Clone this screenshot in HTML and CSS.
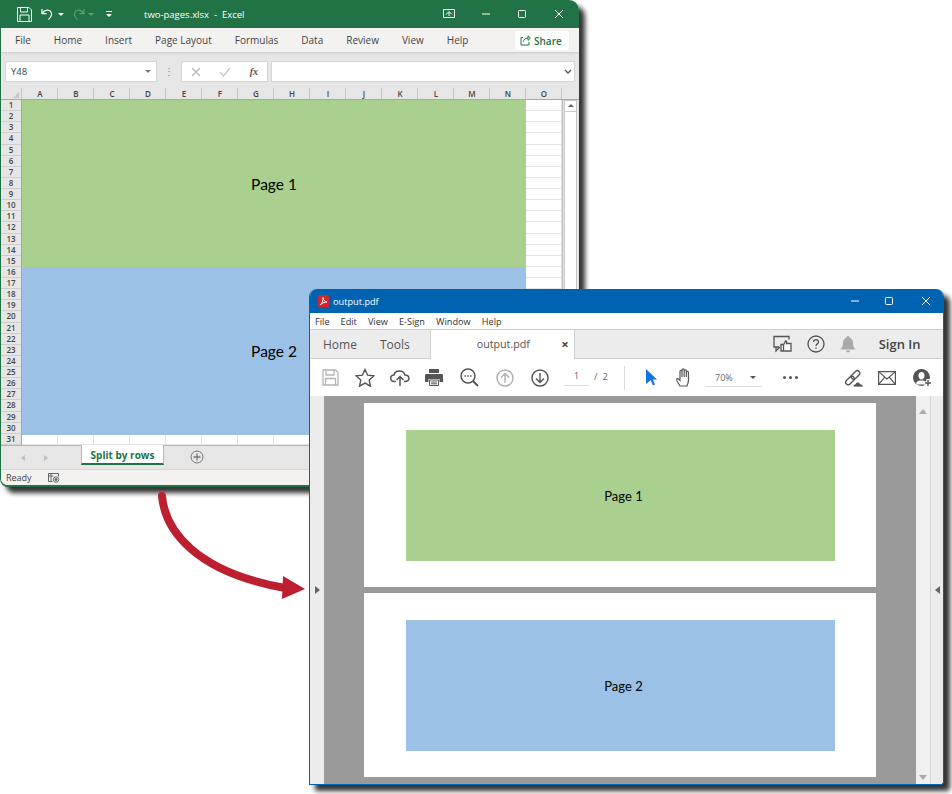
FILE: index.html
```html
<!DOCTYPE html>
<html lang="en">
<head>
  <meta charset="UTF-8">
  <title>two-pages.xlsx to output.pdf</title>
  <link rel="stylesheet" href="styles.css">
</head>
<body>
  <div class="stage">

    <div class="window excel">
      <div class="xl-title">
        <svg class="xl-save" width="15" height="15" viewBox="0 0 15 15" fill="none" stroke="#fff"><path d="M.5.5h11.500l2.500 2.500v11.500h-14z"/><path d="M3.500.5v4.500h7v-4.500M3 14.500v-6.500h9v6.500"/></svg>
        <svg class="xl-undo" width="13" height="13" viewBox="0 0 14 14" fill="none" stroke="#fff" stroke-width="1.300"><path d="M1 1v5h5"/><path d="M1.500 5.500c2-3 5.500-4 8-2.500 3 2 2.500 6-1.500 9.500"/></svg>
        <span class="caret xl-c1"></span>
        <svg class="xl-redo" width="13" height="13" viewBox="0 0 14 14" fill="none" stroke="#5f9c7d" stroke-width="1.200"><path d="M13 1v5h-5"/><path d="M12.500 5.500c-2-3-5.500-4-8-2.500-3 2-2.500 6 1.500 9.500"/></svg>
        <span class="caret dim xl-c2"></span>
        <svg class="xl-qat" width="8" height="8" viewBox="0 0 8 8" fill="#fff"><path d="M1 1h6v1h-6zM1 4h6l-3 3z"/></svg>
        <span class="xl-name">two-pages.xlsx&nbsp; - &nbsp;Excel</span>
        <svg class="xl-disp" width="12" height="10" viewBox="0 0 12 10" fill="none" stroke="#fff"><path d="M.5.5h11v8h-11z"/><path d="M3 5.500l3-3 3 3M6 3v4"/></svg>
        <svg class="xl-min" width="10" height="10" viewBox="0 0 10 10" stroke="#fff"><path d="M1 5h8"/></svg>
        <svg class="xl-max" width="10" height="10" viewBox="0 0 10 10" fill="none" stroke="#fff"><rect x="1.500" y="1.500" width="7" height="7" rx="1"/></svg>
        <svg class="xl-close" width="10" height="10" viewBox="0 0 10 10" stroke="#fff"><path d="M1 1l8 8M9 1l-8 8"/></svg>
      </div>

      <div class="xl-menu">
        <span>File</span><span>Home</span><span>Insert</span><span>Page Layout</span><span>Formulas</span><span>Data</span><span>Review</span><span>View</span><span>Help</span>
        <div class="share">
          <svg width="11" height="11" viewBox="0 0 11 11" fill="none" stroke="#217346"><path d="M8 .8l2.500 2.300-2.500 2.300zM8 3.100c-3 0-4.500 1.500-4.500 3.500M3 2.500h-2v7.500h8v-3"/></svg>
          Share
        </div>
      </div>

      <div class="xl-formula">
        <div class="namebox">Y48<span class="caret grey"></span></div>
        <span class="grip">⋮</span>
        <div class="fx-group">
          <svg width="10" height="10" viewBox="0 0 10 10" stroke="#b5b5b5" stroke-width="1.200"><path d="M1 1l8 8M9 1l-8 8"/></svg>
          <svg width="12" height="10" viewBox="0 0 12 10" fill="none" stroke="#c4c4c4" stroke-width="1.200"><path d="M1 5l3.500 4L11 1"/></svg>
          <i>fx</i>
        </div>
        <div class="formula-input">
          <svg width="8" height="6" viewBox="0 0 8 6" fill="none" stroke="#555" stroke-width="1.300"><path d="M1 1l3 3 3-3"/></svg>
        </div>
      </div>

      <div class="sheet-head">
        <div class="corner"><span></span></div>
        <span>A</span><span>B</span><span>C</span><span>D</span><span>E</span><span>F</span><span>G</span><span>H</span><span>I</span><span>J</span><span>K</span><span>L</span><span>M</span><span>N</span><span>O</span>
      </div>

      <div class="sheet-body">
        <div class="row-heads">
          <span>1</span><span>2</span><span>3</span><span>4</span><span>5</span><span>6</span><span>7</span><span>8</span><span>9</span><span>10</span><span>11</span><span>12</span><span>13</span><span>14</span><span>15</span><span>16</span><span>17</span><span>18</span><span>19</span><span>20</span><span>21</span><span>22</span><span>23</span><span>24</span><span>25</span><span>26</span><span>27</span><span>28</span><span>29</span><span>30</span><span>31</span>
        </div>
        <div class="cells">
          <div class="fill fill-green">Page 1</div>
          <div class="fill fill-blue">Page 2</div>
        </div>
        <div class="xl-scroll">
          <div class="xl-scroll-up"></div>
        </div>
      </div>

      <div class="xl-tabs">
        <span class="nav nav-l"></span>
        <span class="nav nav-r"></span>
        <div class="sheet-tab">Split by rows</div>
        <svg class="add-sheet" width="14" height="14" viewBox="0 0 14 14" fill="none" stroke="#777"><circle cx="7" cy="7" r="6"/><path d="M7 3.500v7M3.500 7h7" stroke-width="1.300"/></svg>
      </div>

      <div class="xl-status">
        <span>Ready</span>
        <svg width="12" height="11" viewBox="0 0 12 11" fill="none" stroke="#666"><path d="M.5 1.500h10v3M.5 1.500v8h4M.5 4h5M3 1.500v8"/><circle cx="8" cy="7.500" r="2.700"/><circle cx="8" cy="7.500" r="1" fill="#666"/></svg>
      </div>
    </div>

    <svg class="arrow" width="160" height="120" viewBox="0 0 160 120">
      <path d="M7 8C10 42 40 84 130 100" fill="none" stroke="#bd1f30" stroke-width="8" stroke-linecap="round"/>
      <path d="M128 88l22 13-23 10z" fill="#bd1f30"/>
    </svg>

    <div class="window acrobat">
      <div class="pdf-title">
        <svg width="11" height="12" viewBox="0 0 11 12"><rect width="11" height="12" rx="1.500" fill="#d8232a"/><path d="M2.500 9.500c1.500-1 3-4.500 2.500-7 .5 3 2 4.500 4 4.500-2.500 0-4.500 1-6.500 2.500z" fill="none" stroke="#fff"/></svg>
        <span class="pdf-name">output.pdf</span>
        <svg class="pdf-min" width="10" height="10" viewBox="0 0 10 10" stroke="#fff"><path d="M1 5h8"/></svg>
        <svg class="pdf-max" width="10" height="10" viewBox="0 0 10 10" fill="none" stroke="#fff"><rect x="1.500" y="1.500" width="7" height="7" rx="1"/></svg>
        <svg class="pdf-close" width="10" height="10" viewBox="0 0 10 10" stroke="#fff"><path d="M1 1l8 8M9 1l-8 8"/></svg>
      </div>

      <div class="pdf-menu">
        <span>File</span><span>Edit</span><span>View</span><span>E-Sign</span><span>Window</span><span>Help</span>
      </div>

      <div class="pdf-tabs">
        <span class="pdf-home">Home</span>
        <span class="pdf-tools">Tools</span>
        <div class="doc-tab">output.pdf<b>×</b></div>
        <svg class="tab-comment" width="20" height="18" viewBox="0 0 20 18" fill="none" stroke="#555" stroke-width="1.300"><path d="M6 12H1V1.500h15v3"/><path d="M3 12v4l4-4"/><path d="M8 9.500h2.500V16H8zM10.500 10l2-4c1 0 1.500.8 1 2.500h4.500V16h-7.500" fill="#fff"/></svg>
        <svg class="tab-help" width="18" height="18" viewBox="0 0 18 18" fill="none" stroke="#555" stroke-width="1.300"><circle cx="9" cy="9" r="8"/><path d="M6.500 7c0-3.300 5-3.300 5 0 0 2-2.500 1.800-2.500 4"/><path d="M9 12.500v1.500"/></svg>
        <svg class="tab-bell" width="16" height="17" viewBox="0 0 16 17" fill="#aaa"><path d="M8 0c1 0 1.500.7 1.500 1.500C12 2.500 13 4.500 13 7c0 3 1 4.500 2.500 6.500h-15C2 11.500 3 10 3 7c0-2.500 1-4.500 3.500-5.500C6.500.7 7 0 8 0zM6 14.500h4c0 2.500-4 2.500-4 0z"/></svg>
        <span class="sign-in">Sign In</span>
      </div>

      <div class="pdf-tools-bar">
        <svg class="tb-save" width="17" height="17" viewBox="0 0 17 17" fill="none" stroke="#b5b5b5" stroke-width="1.300"><path d="M1 1h12.500L16 3.500V16H1z"/><path d="M4 1v5h8V1M3.500 16V9.500h10V16"/></svg>
        <svg class="tb-star" width="20" height="19" viewBox="0 0 20 19" fill="none" stroke="#555" stroke-width="1.400"><path d="M10 1.500l2.600 5.700 6.200.7-4.600 4.200 1.300 6.100L10 15.100l-5.500 3.100 1.300-6.100L1.200 7.900l6.200-.7z"/></svg>
        <svg class="tb-cloud" width="20" height="18" viewBox="0 0 20 18" fill="none" stroke="#555" stroke-width="1.500"><path d="M6 12.500H4.500C-.5 12.500-.5 6 4 6c1-5 9-5.500 11 0 5 0 5.500 6.500 0 6.500h-1"/><path d="M10 17V7.500M6.500 11L10 7.500l3.500 3.500"/></svg>
        <svg class="tb-print" width="18" height="17" viewBox="0 0 18 17"><path d="M4 0h10v4H4z" fill="#555"/><path d="M1.500 5h15c1 0 1.500.5 1.500 1.500V13h-3.500v-3h-11v3H0V6.500C0 5.500.5 5 1.500 5z" fill="#555"/><path d="M4.500 11h9v5.500h-9z" fill="#fff" stroke="#555"/><path d="M6 13h6M6 14.800h6" stroke="#555"/></svg>
        <svg class="tb-find" width="19" height="19" viewBox="0 0 19 19" fill="none" stroke="#555" stroke-width="1.500"><circle cx="8" cy="8" r="7"/><path d="M13 13l5 5" stroke-width="2"/><path d="M4.500 8h1.500M7.300 8h1.500M10 8h1.500" stroke-width="1.300"/></svg>
        <svg class="tb-up" width="18" height="18" viewBox="0 0 18 18" fill="none" stroke="#b0b0b0" stroke-width="1.400"><circle cx="9" cy="9" r="8"/><path d="M9 14V4.500M5 8.500l4-4 4 4"/></svg>
        <svg class="tb-down" width="18" height="18" viewBox="0 0 18 18" fill="none" stroke="#555" stroke-width="1.400"><circle cx="9" cy="9" r="8"/><path d="M9 4v9.500M5 9.500l4 4 4-4"/></svg>
        <span class="page-no">1</span>
        <span class="page-of">/&nbsp; 2</span>
        <span class="tb-sep"></span>
        <svg class="tb-pointer" width="11" height="17" viewBox="0 0 11 17" fill="#1473e6"><path d="M0 0l11 10.500H6.800l2.200 5-2 1-2.300-5.200L0 15z"/></svg>
        <svg class="tb-hand" width="18" height="19" viewBox="0 0 18 19" fill="none" stroke="#555" stroke-width="1.200"><path d="M4 18c-1-2-3-4-3.300-6-.2-1.500 1.200-1.800 2-.8L4 12.500V3.500c0-1.500 2-1.500 2 0V9 2c0-1.500 2.200-1.500 2.200 0v7-6c0-1.500 2.200-1.500 2.200 0v6-4.500c0-1.500 2.100-1.500 2.100 0V12c0 2.500-1 4-1.500 6z" transform="translate(2 0)"/></svg>
        <div class="zoom-box">70%<span class="caret dark"></span></div>
        <span class="tb-more"><i></i><i></i><i></i></span>
        <svg class="tb-link" width="20" height="18" viewBox="0 0 20 18" fill="none" stroke="#555" stroke-width="1.400"><rect x="1" y="9" width="10" height="5" rx="2.500" transform="rotate(-45 6 11.500)"/><rect x="6.500" y="3.500" width="10" height="5" rx="2.500" transform="rotate(-45 11.500 6)"/><path d="M10.500 18c-1.500 0-1.500-3 .8-3 .7-2.500 4.500-2.500 5 0 2.200 0 3 1.500 3 3z" fill="#555" stroke="#fff" stroke-width=".8"/></svg>
        <svg class="tb-mail" width="18" height="14" viewBox="0 0 18 14" fill="none" stroke="#555" stroke-width="1.200"><path d="M.6.6h16.800v12.800H.6z"/><path d="M.6.6L9 8l8.400-7.400M.6 13.400l6-7M17.400 13.400l-6-7"/></svg>
        <svg class="tb-user" width="19" height="18" viewBox="0 0 19 18"><circle cx="8.500" cy="8.500" r="8.500" fill="#555"/><path d="M8.500 3c2 0 3 1.500 3 3.500s-1 4-3 4-3-2-3-4S6.500 3 8.500 3z" fill="#fff"/><path d="M3 14c1-2 3-2.500 5.500-2.500 1 0 2 .1 3 .5v3.500H4z" fill="#fff"/><path d="M15 10v8M11 14h8" stroke="#fff" stroke-width="3.500"/><path d="M15 11v6M12 14h6" stroke="#555" stroke-width="1.400"/></svg>
      </div>

      <div class="pdf-body">
        <div class="side-left"><span class="tri tri-r"></span></div>
        <div class="canvas">
          <div class="pdf-page"><div class="pdf-box box-green">Page 1</div></div>
          <div class="pdf-page"><div class="pdf-box box-blue">Page 2</div></div>
        </div>
        <div class="pdf-scroll">
          <span class="tri tri-up"></span>
          <span class="tri tri-down"></span>
        </div>
        <div class="side-right"><span class="tri tri-l"></span></div>
      </div>
    </div>

  </div>
</body>
</html>
```

FILE: styles.css
```css
* {
  box-sizing: border-box;
}
body {
  margin: 0;
  background: #fff;
  font-family: "Open Sans", "Noto Sans", sans-serif;
  color: #444;
}
.stage {
  position: relative;
  width: 952px;
  height: 794px;
  overflow: hidden;
}
.window {
  position: absolute;
  display: flex;
  flex-direction: column;
  overflow: hidden;
  box-shadow: 6px 6px 5px rgba(0, 0, 0, 0.8);
}
.caret {
  display: block;
  width: 0;
  height: 0;
  border-left: 3px solid transparent;
  border-right: 3px solid transparent;
  border-top: 3px solid #fff;
}
.caret.dim {
  border-top-color: #5f9c7d;
}
.caret.grey {
  border-top-color: #777;
}
.caret.dark {
  border-top-color: #555;
}

/* excel window */
.excel {
  left: 0;
  top: 0;
  width: 579px;
  height: 487px;
  border-radius: 0 10px 10px 8px;
  background: #e6e6e6;
  border-left: 1px solid #217346;
  border-bottom: 2px solid #217346;
}
.xl-title {
  display: flex;
  align-items: center;
  height: 28px;
  flex: none;
  background: #217346;
  color: #fff;
  font-size: 9.5px;
}
.xl-save { margin-left: 16px; }
.xl-undo { margin-left: 9px; }
.xl-c1 { margin-left: 4px; }
.xl-redo { margin-left: 8px; }
.xl-c2 { margin-left: 3px; }
.xl-qat { margin-left: 11px; }
.xl-name {
  margin-left: 31px;
  width: 299px;
  white-space: nowrap;
}
.xl-min { margin-left: 26px; }
.xl-max { margin-left: 26px; }
.xl-close { margin-left: 27px; }
.xl-menu {
  position: relative;
  display: flex;
  align-items: center;
  gap: 23px;
  height: 24px;
  flex: none;
  padding-left: 14px;
  background: #f3f2f1;
  font-size: 10px;
  box-shadow: 0 1px 2px rgba(0, 0, 0, 0.12);
}
.share {
  display: flex;
  align-items: center;
  gap: 3px;
  margin-left: auto;
  margin-right: 10px;
  margin-top: 1px;
  width: 54px;
  height: 19px;
  padding-left: 5px;
  background: #fff;
  color: #217346;
  font-size: 10px;
  font-weight: 600;
  border-radius: 2px;
}
.xl-formula {
  display: flex;
  align-items: flex-start;
  height: 36px;
  flex: none;
  padding: 9px 4px 0 4px;
  background: #e6e6e6;
}
.namebox {
  display: flex;
  align-items: center;
  justify-content: space-between;
  width: 152px;
  height: 21px;
  padding: 0 5px;
  background: #fff;
  border: 1px solid #d6d6d6;
  font-size: 9.5px;
}
.grip {
  width: 24px;
  text-align: center;
  font-size: 10px;
  line-height: 21px;
  color: #888;
}
.fx-group {
  display: flex;
  align-items: center;
  justify-content: space-between;
  width: 87px;
  height: 21px;
  padding: 0 9px;
  background: #fff;
  border: 1px solid #d6d6d6;
}
.fx-group i {
  font-family: "Liberation Serif", serif;
  font-size: 10px;
  font-weight: 700;
  color: #555;
}
.formula-input {
  display: flex;
  align-items: center;
  justify-content: flex-end;
  flex: 1;
  height: 21px;
  margin-left: 3px;
  padding-right: 2px;
  background: #fff;
  border: 1px solid #d6d6d6;
}
.sheet-head {
  display: grid;
  grid-template-columns: 21px repeat(15, 36px);
  height: 12px;
  flex: none;
  background: #e6e6e6;
  border-bottom: 1px solid #a8a8a8;
  font-size: 8px;
  line-height: 11px;
  font-weight: 600;
  color: #444;
  text-align: center;
}
.sheet-head span {
  padding-left: 1px;
  border-right: 1px solid #c6c6c6;
}
.sheet-head .corner {
  position: relative;
  border-right: 1px solid #c6c6c6;
}
.corner span {
  position: absolute;
  right: 2px;
  bottom: 1px;
  width: 0;
  height: 0;
  padding: 0;
  border-left: 6px solid transparent;
  border-bottom: 6px solid #c8c8c8;
  border-right: 0;
}
.sheet-body {
  display: flex;
  height: 345px;
  flex: none;
}
.row-heads {
  display: grid;
  grid-auto-rows: 11.13px;
  width: 21px;
  flex: none;
  background: #e6e6e6;
  border-right: 1px solid #a8a8a8;
  font-size: 8px;
  font-weight: 600;
  text-align: center;
}
.row-heads span {
  line-height: 10.5px;
  border-bottom: 1px solid #cdcdcd;
}
.cells {
  width: 541px;
  flex: none;
  background-color: #fff;
  background-image:
    repeating-linear-gradient(to bottom, transparent 0, transparent 10.13px, #e3e3e3 10.13px, #e3e3e3 11.13px),
    repeating-linear-gradient(to right, transparent 0, transparent 35px, #e3e3e3 35px, #e3e3e3 36px);
  border-right: 1px solid #bdbdbd;
}
.fill {
  display: flex;
  align-items: center;
  justify-content: center;
  width: 504px;
  font-family: Lato, "Open Sans", sans-serif;
  font-size: 15.5px;
  color: #000;
}
.fill-green {
  height: 167px;
  background: #a9d08e;
}
.fill-blue {
  height: 168px;
  background: #9bc2e6;
}
.xl-scroll {
  width: 13px;
  margin-left: 1px;
  background: #fff;
  border: 1px solid #c8c8c8;
  border-top: 0;
}
.xl-scroll-up {
  position: relative;
  height: 12px;
  margin: 0 -1px;
  background: #fff;
  border: 1px solid #c8c8c8;
}
.xl-scroll-up::after {
  content: "";
  position: absolute;
  left: 3px;
  top: 3px;
  border-left: 3px solid transparent;
  border-right: 3px solid transparent;
  border-bottom: 3px solid #666;
}
.xl-tabs {
  display: flex;
  align-items: flex-start;
  height: 24px;
  flex: none;
  background: #e6e6e6;
  border-top: 1px solid #b8b8b8;
}
.nav {
  display: block;
  width: 0;
  height: 0;
  margin-top: 9px;
  border-top: 3px solid transparent;
  border-bottom: 3px solid transparent;
}
.nav-l {
  margin-left: 20px;
  border-right: 4px solid #bdbdbd;
}
.nav-r {
  margin-left: 19px;
  border-left: 4px solid #bdbdbd;
}
.sheet-tab {
  width: 83px;
  height: 20px;
  margin-left: 33px;
  margin-top: -1px;
  background: #fff;
  border-left: 1px solid #b8b8b8;
  border-right: 1px solid #b8b8b8;
  border-bottom: 2px solid #217346;
  color: #217346;
  font-size: 10px;
  font-weight: 700;
  line-height: 20px;
  text-align: center;
}
.add-sheet {
  margin-left: 26px;
  margin-top: 4px;
}
.xl-status {
  display: flex;
  align-items: center;
  gap: 16px;
  flex: 1;
  padding-left: 5px;
  background: #f3f2f1;
  border-top: 1px solid #d6d6d6;
  font-size: 9px;
}

/* arrow between the two windows */
.arrow {
  position: absolute;
  left: 155px;
  top: 488px;
}

/* acrobat window */
.acrobat {
  left: 309px;
  top: 289px;
  width: 635px;
  height: 496px;
  border-radius: 8px 8px 4px 0;
  background: #fff;
  border-left: 1px solid #0063b1;
  border-right: 1px solid #0063b1;
  border-bottom: 1px solid #0063b1;
}
.pdf-title {
  display: flex;
  align-items: center;
  height: 24px;
  flex: none;
  padding-left: 8px;
  background: #0063b1;
  color: #fff;
  font-size: 9.2px;
}
.pdf-name {
  margin-left: 4px;
  width: 497px;
}
.pdf-min { margin-left: 20px; }
.pdf-max { margin-left: 24px; }
.pdf-close { margin-left: 27px; }
.pdf-menu {
  display: flex;
  align-items: center;
  gap: 11px;
  height: 16px;
  flex: none;
  padding-left: 5px;
  font-size: 9.2px;
  color: #333;
}
.pdf-tabs {
  display: flex;
  align-items: center;
  height: 30px;
  flex: none;
  background: #ececec;
  border-top: 1px solid #cfcfcf;
  border-bottom: 1px solid #cfcfcf;
}
.pdf-home {
  margin-left: 13px;
  font-size: 12px;
  color: #555;
}
.pdf-tools {
  margin-left: 23px;
  font-size: 12px;
  color: #555;
}
.doc-tab {
  position: relative;
  width: 145px;
  height: 29px;
  margin-left: 20px;
  margin-bottom: -1px;
  padding-left: 46px;
  background: #fff;
  border-left: 1px solid #cfcfcf;
  border-right: 1px solid #cfcfcf;
  font-size: 10.7px;
  line-height: 28px;
  color: #555;
}
.doc-tab b {
  position: absolute;
  right: 5px;
  top: 0;
  font-size: 13px;
  color: #444;
}
.tab-comment { margin-left: 198px; }
.tab-help { margin-left: 14px; }
.tab-bell { margin-left: 15px; }
.sign-in {
  margin-left: 23px;
  font-size: 13px;
  font-weight: 600;
  color: #444;
}
.pdf-tools-bar {
  display: flex;
  align-items: center;
  height: 37px;
  flex: none;
  background: #fff;
  font-size: 9.5px;
  color: #666;
}
.tb-save { margin-left: 12px; }
.tb-star { margin-left: 16px; }
.tb-cloud { margin-left: 15px; }
.tb-print { margin-left: 15px; }
.tb-find { margin-left: 17px; }
.tb-up { margin-left: 17px; }
.tb-down { margin-left: 17px; }
.page-no {
  width: 25px;
  margin-left: 15px;
  padding-bottom: 3px;
  border-bottom: 1px solid #ddd;
  text-align: center;
}
.page-of {
  margin-left: 5px;
  width: 30px;
  padding-bottom: 3px;
}
.tb-sep {
  width: 1px;
  height: 24px;
  background: #ddd;
}
.tb-pointer { margin-left: 21px; }
.tb-hand { margin-left: 17px; }
.zoom-box {
  display: flex;
  align-items: center;
  justify-content: space-between;
  width: 57px;
  height: 18px;
  margin-left: 13px;
  padding: 0 6px 0 10px;
  border-bottom: 1px solid #ddd;
  font-size: 9px;
}
.tb-more {
  display: flex;
  gap: 3px;
  margin-left: 21px;
}
.tb-more i {
  display: block;
  width: 3px;
  height: 3px;
  border-radius: 50%;
  background: #555;
}
.tb-link { margin-left: 46px; }
.tb-mail { margin-left: 14px; }
.tb-user { margin-left: 17px; }
.pdf-body {
  display: flex;
  flex: 1;
  min-height: 0;
}
.side-left {
  display: flex;
  align-items: center;
  justify-content: center;
  width: 14px;
  background: #ececec;
}
.canvas {
  display: flex;
  flex-direction: column;
  align-items: center;
  gap: 6px;
  width: 592px;
  flex: none;
  padding-top: 7px;
  background: #9a9a9a;
}
.pdf-page {
  display: flex;
  align-items: center;
  justify-content: center;
  width: 512px;
  height: 184px;
  flex: none;
  background: #fff;
}
.pdf-box {
  display: flex;
  align-items: center;
  justify-content: center;
  width: 429px;
  height: 131px;
  margin-left: 1px;
  padding: 2px 0 0 6px;
  font-family: Lato, "Open Sans", sans-serif;
  font-size: 13px;
  color: #000;
}
.box-green {
  background: #a9d08e;
}
.box-blue {
  background: #9bc2e6;
}
.pdf-scroll {
  position: relative;
  width: 14px;
  background: #f0f0f0;
}
.side-right {
  display: flex;
  align-items: center;
  justify-content: center;
  flex: 1;
  background: #ececec;
  border-left: 1px solid #d4d4d4;
}
.tri {
  display: block;
  width: 0;
  height: 0;
}
.tri-r {
  border-top: 4px solid transparent;
  border-bottom: 4px solid transparent;
  border-left: 5px solid #666;
}
.tri-l {
  border-top: 4px solid transparent;
  border-bottom: 4px solid transparent;
  border-right: 5px solid #666;
}
.tri-up, .tri-down {
  position: absolute;
  left: 3px;
  border-left: 4px solid transparent;
  border-right: 4px solid transparent;
}
.tri-up {
  top: 13px;
  border-bottom: 5px solid #aaa;
}
.tri-down {
  bottom: 4px;
  border-top: 5px solid #aaa;
}
```
